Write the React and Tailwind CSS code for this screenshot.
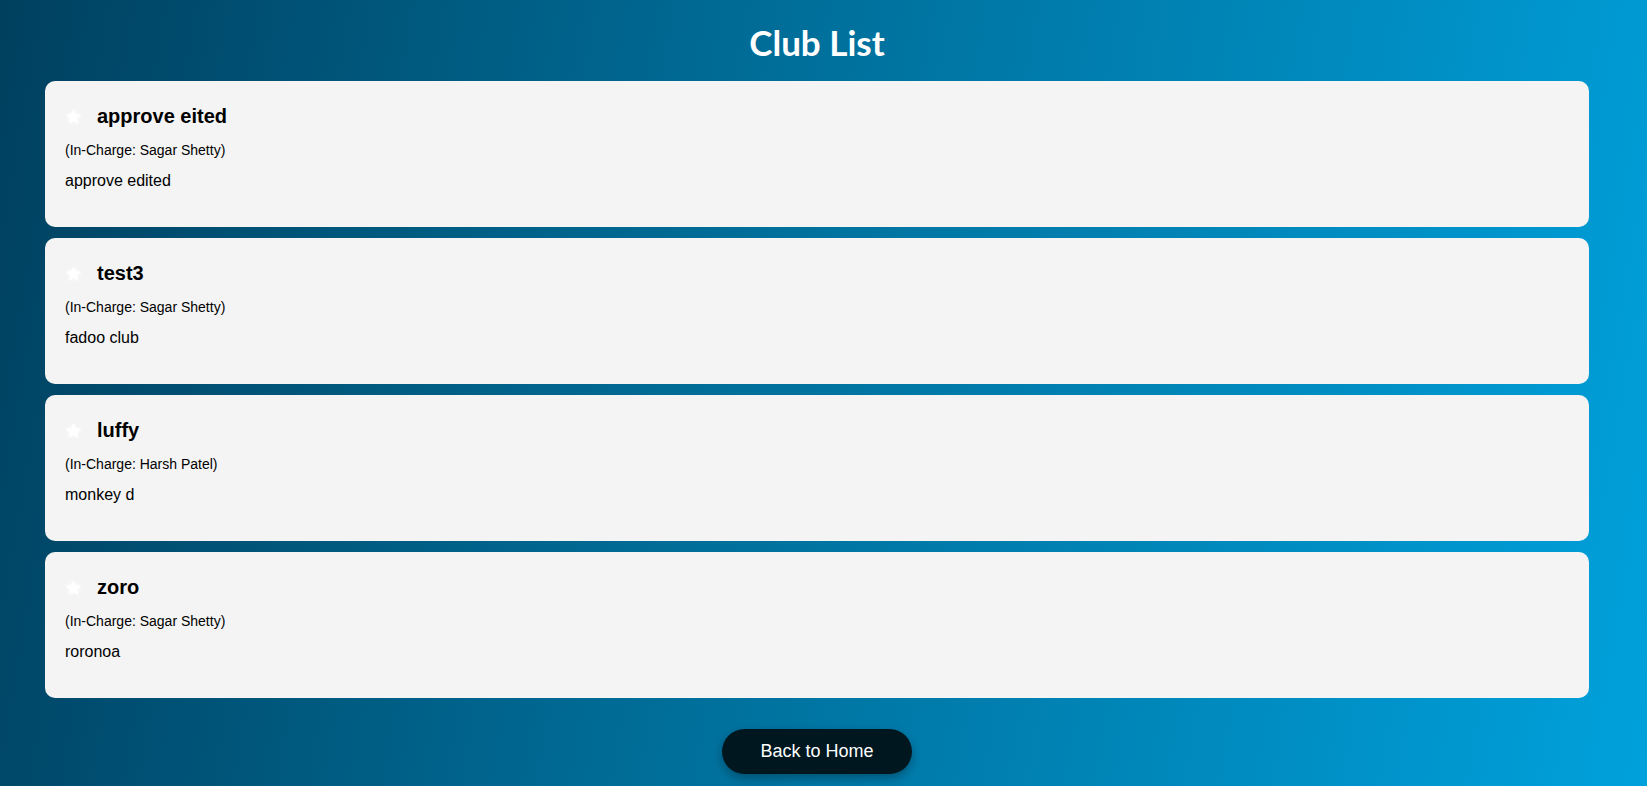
const clubs = [
  { name: "approve eited", incharge: "Sagar Shetty", desc: "approve edited" },
  { name: "test3", incharge: "Sagar Shetty", desc: "fadoo club" },
  { name: "luffy", incharge: "Harsh Patel", desc: "monkey d" },
  { name: "zoro", incharge: "Sagar Shetty", desc: "roronoa" },
];

function Star() {
  return (
    <svg viewBox="0 0 24 24" className="h-[19px] w-[19px] shrink-0 drop-shadow-[0_0_2px_rgba(255,255,255,0.9)]" fill="#ffffff">
      <path d="M12 2.5l2.8 6.6 7.1.6-5.4 4.7 1.6 7-6.1-3.7-6.1 3.7 1.6-7-5.4-4.7 7.1-.6z" />
    </svg>
  );
}

function ClubCard({ club }) {
  return (
    <div className="h-[146px] rounded-[10px] bg-[#f4f4f4] pl-[19px] pr-5 pt-[23px] text-black">
      <div className="flex h-6 items-center gap-[14px]">
        <Star />
        <h3 className="text-[20px] leading-6 font-bold">{club.name}</h3>
      </div>
      <p className="mt-[13px] pl-px text-[14px] leading-[18px]">(In-Charge: {club.incharge})</p>
      <p className="mt-[13px] pl-px text-[16px] leading-[18px]">{club.desc}</p>
    </div>
  );
}

export default function App() {
  return (
    <main
      className="min-h-screen bg-[linear-gradient(100deg,#00405f_0%,#006a94_40%,#00a1dc_100%)] pl-[45px] pr-[58px] pt-[20px] pb-[12px]"
      style={{ fontFamily: '"Liberation Sans", Arial, sans-serif' }}
    >
      <h1
        className="mb-[17px] text-center text-[35px] leading-[44px] font-bold text-white"
        style={{ fontFamily: 'Lato, "Open Sans", sans-serif' }}
      >
        Club List
      </h1>

      <div className="flex flex-col gap-[11px]">
        {clubs.map((club) => (
          <ClubCard key={club.name} club={club} />
        ))}
      </div>

      <div className="mt-[31px] flex justify-center">
        <button
          type="button"
          className="h-[45px] w-[190px] rounded-full bg-[#00171f] text-[18px] text-white shadow-[0_4px_10px_rgba(0,0,0,0.3)]"
        >
          Back to Home
        </button>
      </div>
    </main>
  );
}
